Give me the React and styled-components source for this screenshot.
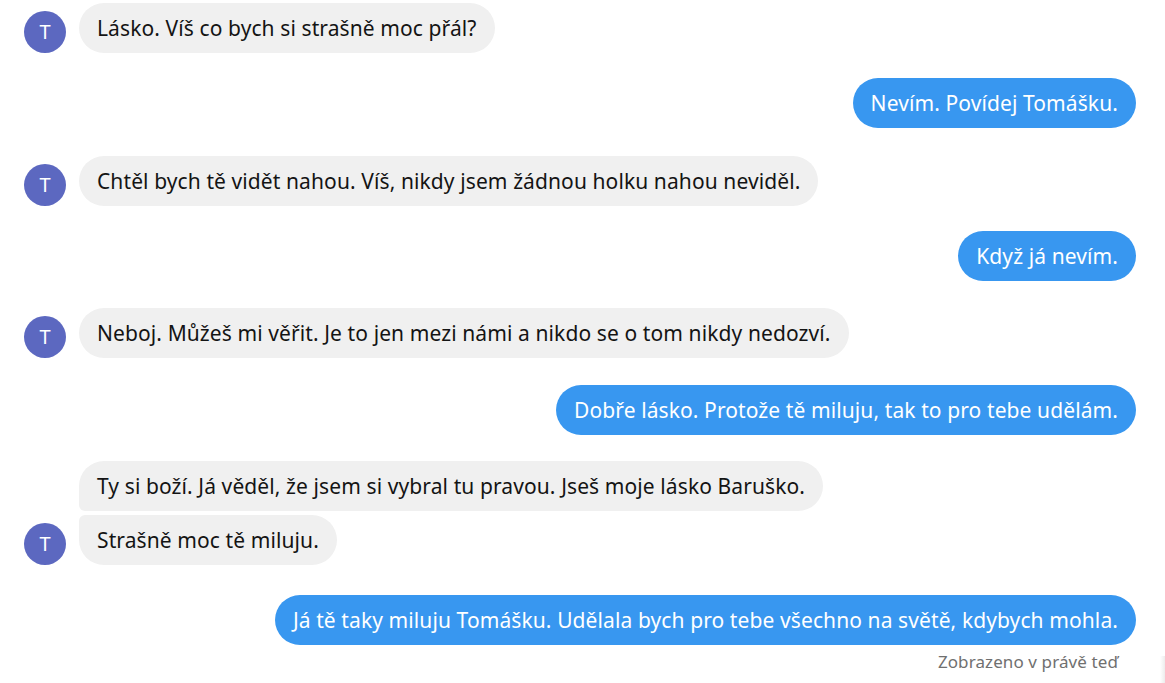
import React from "react";
import styled, { createGlobalStyle } from "styled-components";

const Global = createGlobalStyle`
  html, body { margin: 0; padding: 0; background: #ffffff; }
  body { font-family: "Noto Sans", "Open Sans", sans-serif; }
`;

const Page = styled.div`
  position: relative;
  width: 1165px;
  height: 683px;
  box-sizing: border-box;
  padding: 3px 29px 0 24px;
  display: flex;
  flex-direction: column;
  overflow: hidden;
`;

const Group = styled.div`
  display: flex;
  align-items: flex-end;
  justify-content: ${(p) => (p.$mine ? "flex-end" : "flex-start")};
  margin-top: ${(p) => p.$gap}px;
`;

const Avatar = styled.div`
  width: 42px;
  height: 42px;
  border-radius: 50%;
  background: #5c68c0;
  color: #ffffff;
  display: flex;
  align-items: center;
  justify-content: center;
  font-size: 20px;
  line-height: 1;
  flex: none;
  margin-right: 13px;
`;

const Stack = styled.div`
  display: flex;
  flex-direction: column;
  align-items: ${(p) => (p.$mine ? "flex-end" : "flex-start")};
  gap: 4px;
`;

const Bubble = styled.div`
  height: 50px;
  box-sizing: border-box;
  padding: 0 18px;
  display: flex;
  align-items: center;
  font-size: 21px;
  letter-spacing: 0.1px;
  white-space: nowrap;
  background: ${(p) => (p.$mine ? "#3897f0" : "#f0f0f0")};
  color: ${(p) => (p.$mine ? "#ffffff" : "#141414")};
  border-radius: ${(p) => p.$radius || "25px"};
`;

const Seen = styled.div`
  align-self: flex-end;
  margin-top: 5px;
  margin-right: 18px;
  font-size: 17px;
  letter-spacing: 0.1px;
  color: #707070;
`;

const EdgeShade = styled.div`
  position: absolute;
  right: 0;
  top: 656px;
  width: 5px;
  bottom: 0;
  background: linear-gradient(to right, #ffffff, #ececec);
`;

const messages = [
  { mine: false, gap: 0, texts: ["Lásko. Víš co bych si strašně moc přál?"] },
  { mine: true, gap: 25, texts: ["Nevím. Povídej Tomášku."] },
  { mine: false, gap: 28, texts: ["Chtěl bych tě vidět nahou. Víš, nikdy jsem žádnou holku nahou neviděl."] },
  { mine: true, gap: 25, texts: ["Když já nevím."] },
  { mine: false, gap: 27, texts: ["Neboj. Můžeš mi věřit. Je to jen mezi námi a nikdo se o tom nikdy nedozví."] },
  { mine: true, gap: 27, texts: ["Dobře lásko. Protože tě miluju, tak to pro tebe udělám."] },
  { mine: false, gap: 26, texts: ["Ty si boží. Já věděl, že jsem si vybral tu pravou. Jseš moje lásko Baruško.", "Strašně moc tě miluju."] },
  { mine: true, gap: 30, texts: ["Já tě taky miluju Tomášku. Udělala bych pro tebe všechno na světě, kdybych mohla."] },
];

function radiusFor(i, n) {
  if (n === 1) return "25px";
  if (i === 0) return "25px 25px 25px 6px";
  if (i === n - 1) return "6px 25px 25px 25px";
  return "6px 25px 25px 6px";
}

export default function App() {
  return (
    <>
      <Global />
      <Page>
        {messages.map((m, gi) => (
          <Group key={gi} $mine={m.mine} $gap={m.gap}>
            {!m.mine && <Avatar>T</Avatar>}
            <Stack $mine={m.mine}>
              {m.texts.map((t, i) => (
                <Bubble key={i} $mine={m.mine} $radius={m.mine ? undefined : radiusFor(i, m.texts.length)}>
                  {t}
                </Bubble>
              ))}
            </Stack>
          </Group>
        ))}
        <Seen>Zobrazeno v právě teď</Seen>
        <EdgeShade />
      </Page>
    </>
  );
}
